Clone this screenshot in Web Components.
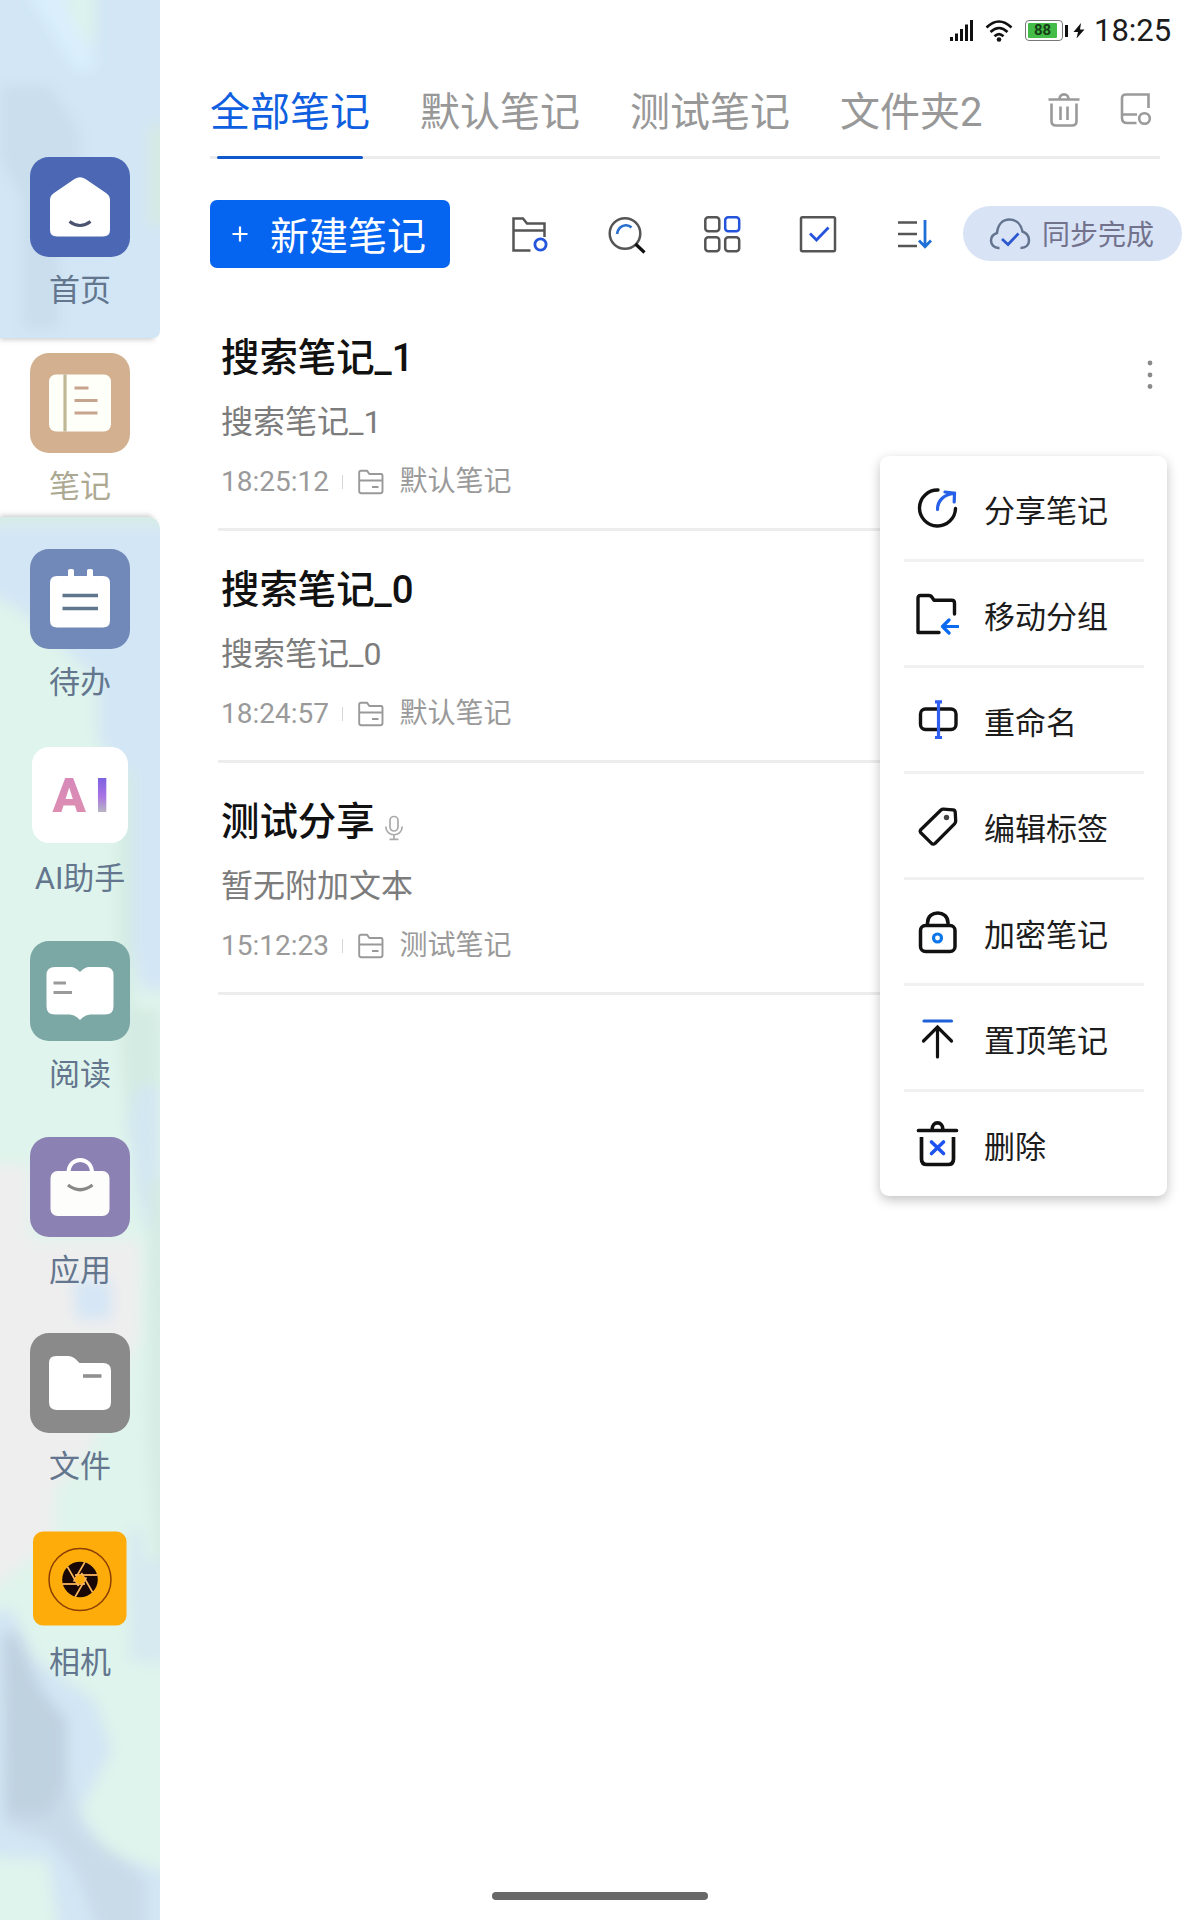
<!DOCTYPE html>
<html lang="zh-CN">
<head>
<meta charset="utf-8">
<title>笔记</title>
<style>
html,body{margin:0;padding:0}
body{width:1200px;height:1920px;overflow:hidden;background:#fff;font-family:Roboto,"Noto Sans CJK SC",sans-serif}
</style>
</head>
<body>
<note-app></note-app>
<script>
const ICONS = {
  signal: [26,26,`<g fill="#111"><rect x="1" y="19" width="3" height="4"/><rect x="6" y="15.500" width="3" height="7.500"/><rect x="11" y="11" width="3" height="12"/><rect x="16" y="6.500" width="3" height="16.500"/><rect x="21" y="2" width="3" height="21"/></g>`],
  wifi: [28,26,`<g fill="none" stroke="#111" stroke-width="2.600"><path d="M1.500 9.500Q14-2.500 26.500 9.500"/><path d="M5.500 14Q14 6 22.500 14"/><path d="M9.500 18.200Q14 14 18.500 18.200"/></g><circle cx="14" cy="21.500" r="2.300" fill="#111"/>`],
  bolt: [12,16,`<path d="M8 0L.5 9H5L3.500 15.500L11.500 6.500H7Z" fill="#111"/>`],
  trash: [34,36,`<g fill="none" stroke="#9a9a9a" stroke-width="2.600"><path d="M1.500 7.500H32.500M12.500 7C12.500 .8 21.500 .8 21.500 7M4.500 11.500V29Q4.500 33.500 9 33.500H25Q29.500 33.500 29.500 29V11.500M13.500 14.500V28M20.500 14.500V28"/></g>`],
  drive: [34,36,`<g fill="none" stroke="#9a9a9a" stroke-width="2.600"><path d="M17.500 31H8Q3 31 3 26V6Q3 2.500 7 2.500H29.500V16M3 22.500H18"/><circle cx="25.500" cy="26.500" r="5.300"/></g>`],
  folderSet: [40,40,`<g fill="none" stroke="#555" stroke-width="2.500"><path d="M20.500 36.500H3.500V4.500H13L17 9.500H34.500V23M3.500 16.500H34.500"/><circle cx="30.500" cy="30.500" r="5.600" stroke="#2453dc" stroke-width="2.800"/></g>`],
  search: [40,40,`<g fill="none"><circle cx="19" cy="19.500" r="15.300" stroke="#555" stroke-width="2.500"/><path d="M11 20Q12.500 12 19.500 11.300Q23 11 25.500 13.500" stroke="#2a6fd0" stroke-width="2.600"/><path d="M29.500 30L38.500 38.500" stroke="#111" stroke-width="3.200"/></g>`],
  grid: [40,40,`<g fill="none" stroke="#555" stroke-width="2.500"><rect x="3.300" y="3.300" width="14" height="14" rx="3"/><rect x="23.200" y="3.300" width="14" height="14" rx="3" stroke="#2453dc"/><rect x="3.300" y="23.300" width="14" height="14" rx="3"/><rect x="23.200" y="23.300" width="14" height="14" rx="3"/></g>`],
  check: [40,40,`<g fill="none"><rect x="3" y="3.300" width="34" height="34" rx="1.500" stroke="#555" stroke-width="2.500"/><path d="M12 19.500L18.500 26L30.500 13.500" stroke="#2453dc" stroke-width="2.800"/></g>`],
  sort: [40,40,`<g fill="none" stroke="#555" stroke-width="2.600"><path d="M4 8.500H23M4 20H23M4 32H23"/><path d="M31 6V32M25 26.500L31 32.800L37 26.500" stroke="#1e6fd6" stroke-width="2.800"/></g>`],
  cloud: [42,34,`<g fill="none" stroke="#64748e" stroke-width="2.500"><path d="M10.500 31C5 31.500 2 27.500 2 23.500C2 19.500 5 17 8 16C9 7 14 2.500 20.500 2.500C27.500 2.500 32 7.500 33.500 14.500C37.500 16 40 19.500 40 23.500C40 28 37 31 31.500 31"/><path d="M13 22L19 27.500L29.500 16.500" stroke="#2c57cf" stroke-width="2.700"/></g>`],
  folder: [28,26,`<g fill="none" stroke="#999" stroke-width="1.900"><path d="M2.200 22V3.500Q2.200 1.800 4 1.800H10L12.500 5H24Q25.500 5 25.500 6.500V22Q25.500 24.200 23.500 24.200H4.200Q2.200 24.200 2.200 22ZM2 11.500H25.500M15 18H21.500"/></g>`],
  mic: [20,26,`<g fill="none" stroke="#aaa" stroke-width="1.700"><rect x="6" y="1.500" width="8" height="14.500" rx="4"/><path d="M1.800 11.500C1.800 22.500 18.200 22.500 18.200 11.500M10 19.800V24M5.500 24.300H14.500"/></g>`],
  dots: [10,32,`<g fill="#8a8a8a"><circle cx="5" cy="4" r="2.400"/><circle cx="5" cy="16" r="2.400"/><circle cx="5" cy="27.500" r="2.400"/></g>`],
  share: [44,44,`<g fill="none" stroke="#111" stroke-width="3.400" stroke-linecap="round"><path d="M23 4A18 18 0 1 0 40.500 22.500"/><path d="M22.500 23.500C22.500 14.500 29 8.500 39 7.500M30 6L39.500 7.200L39.200 16" stroke="#2660e8" stroke-width="3.200"/></g>`],
  move: [44,44,`<g fill="none" stroke="#111" stroke-width="3.400" stroke-linecap="round" stroke-linejoin="round"><path d="M24 40.500H3V6Q3 3.500 5.500 3.500H14Q16 3.500 17.500 6L19 8.300H36.500Q39.500 8.300 39.500 11V22"/><path d="M43 34.500H27.500M34 28L27.500 34.500L34 41" stroke="#0b6bf0" stroke-width="3.200"/></g>`],
  rename: [44,44,`<g fill="none" stroke="#111" stroke-width="3.400"><rect x="5.500" y="11" width="35.500" height="20.500" rx="5"/><path d="M23.500 3.500V40M20 3.800H27M20 39.500H27" stroke="#2e5ff0" stroke-width="3.200"/></g>`],
  tag: [44,44,`<path d="M5.500 26L26 6Q27 5 28.500 5.100L38 5.800Q40 6 40.200 8L40.700 17Q40.700 18.500 39.500 19.800L20 39.500Q18 41 16 38.800L5.500 28.500Q4.500 27.200 5.500 26Z" fill="none" stroke="#111" stroke-width="3.300"/><circle cx="31.500" cy="13.500" r="2.700" fill="#444"/>`],
  lock: [44,44,`<g fill="none" stroke="#111" stroke-width="3.500"><rect x="5.500" y="15.500" width="34.500" height="26" rx="5"/><path d="M12.500 15V13C12.500-.5 33 -.5 33 13V15"/><circle cx="22.500" cy="28" r="4" stroke="#0d76ea" stroke-width="3.200"/></g>`],
  top: [44,44,`<g fill="none" stroke="#111" stroke-width="3.200" stroke-linecap="round"><path d="M9 5H36.500" stroke="#1f60d8"/><path d="M22.500 41V12M8.500 25L22.500 11L36.500 25"/></g>`],
  del: [44,46,`<g fill="none" stroke="#111" stroke-width="3.700" stroke-linecap="round"><path d="M3.500 9.500H41.500M17 9C17-.5 28-.5 28 9"/><path d="M6.500 16V38Q6.500 43.500 12 43.500H33Q38.500 43.500 38.500 38V16" stroke-linecap="butt"/><path d="M16.500 21L28.500 32.500M28.500 21L16.500 32.500" stroke="#1d53ee" stroke-width="3.600"/></g>`],
  home: [100,100,`<rect width="100" height="100" rx="19" fill="#4c68b5"/><path d="M20 43Q20 38.500 24 36L44.500 22Q50 18.500 55.500 22L76 36Q80 38.500 80 43V73Q80 79.500 73 79.500H27Q20 79.500 20 73Z" fill="#fff"/><path d="M39.500 64.500Q50 72.500 60.500 64.500" fill="none" stroke="#4a5470" stroke-width="3"/>`],
  note: [100,100,`<rect width="100" height="100" rx="19" fill="#d2b090"/><rect x="19" y="21.500" width="62" height="57" rx="7" fill="#fffffa"/><path d="M35 21.500V78.500" stroke="#bfb795" stroke-width="3.200"/><path d="M44.500 35H58.500M44.500 47.500H67.500M44.500 60H67.500" stroke="#c7a48c" stroke-width="3"/>`],
  todo: [100,100,`<rect width="100" height="100" rx="19" fill="#7089b8"/><path d="M27 27H38V21.500Q38 20 40 20H42Q44 20 44 21.500V27H57V21.500Q57 20 59 20H61Q63 20 63 21.500V27H73Q80 27 80 34V71.500Q80 78.500 73 78.500H27Q20 78.500 20 71.500V34Q20 27 27 27Z" fill="#fff"/><path d="M32.500 46.500H68M32.500 59.500H68" stroke="#60768c" stroke-width="3.600"/>`],
  read: [100,100,`<rect width="100" height="100" rx="19" fill="#7ba7a5"/><path d="M25 26H41Q45 26 50 31Q55 26 59 26H75Q83.500 26 83.500 34V65.500Q83.500 73.500 75 73.500H60Q55 73.500 50 79Q45 73.500 40 73.500H25Q16.500 73.500 16.500 65.500V34Q16.500 26 25 26Z" fill="#fff"/><path d="M23.500 42H36M23.500 51.500H42" stroke="#9a9a9a" stroke-width="3.200"/>`],
  apps: [100,100,`<rect width="100" height="100" rx="19" fill="#8b81b3"/><path d="M38.500 36C38.500 18.500 62 18.500 62 36" fill="none" stroke="#fff" stroke-width="4"/><rect x="20.500" y="34" width="59" height="45" rx="7" fill="#fdfdfc"/><path d="M38 48Q50 57.500 62.500 48" fill="none" stroke="#888" stroke-width="3.200"/>`],
  files: [100,100,`<rect width="100" height="100" rx="19" fill="#8a8a8a"/><path d="M26 23H38Q42.500 23 46 26.500L49.500 30H73Q81 30 81 37.500V69Q81 77 73 77H27Q19 77 19 69V30Q19 23 26 23Z" fill="#fff"/><path d="M53 43H71.500" stroke="#909090" stroke-width="3.600"/>`],
  camera: [100,100,`<rect x="3" y="2.500" width="93.500" height="94" rx="10" fill="#fdac0a"/><circle cx="50" cy="50.500" r="31" fill="none" stroke="#8c3f00" stroke-width="1.500"/><circle cx="50" cy="50.500" r="17.800" fill="#180704"/><g stroke="#fcb65c" stroke-width="1.800"><path d="M45 46L67.500 46"/><path d="M45 46L67.500 46" transform="rotate(60 50 50.500)"/><path d="M45 46L67.500 46" transform="rotate(120 50 50.500)"/><path d="M45 46L67.500 46" transform="rotate(180 50 50.500)"/><path d="M45 46L67.500 46" transform="rotate(240 50 50.500)"/><path d="M45 46L67.500 46" transform="rotate(300 50 50.500)"/></g><circle cx="50" cy="50.500" r="4.500" fill="#fdac0a"/>`]
};

function define(name, css, html) {
  customElements.define(name, class extends HTMLElement {
    connectedCallback() {
      if (this.shadowRoot) return;
      const t = document.createElement('template');
      t.innerHTML = `<style>*{box-sizing:border-box}${css}</style>` + (typeof html === 'function' ? html(this) : html);
      this.attachShadow({mode: 'open'}).append(t.content.cloneNode(true));
    }
  });
}

define('ui-icon', `:host{display:block;flex:none}svg{display:block}`, el => {
  const [w, h, body] = ICONS[el.getAttribute('name')];
  return `<svg width="${w}" height="${h}" viewBox="0 0 ${w} ${h}">${body}</svg>`;
});

define('battery-level', `:host{display:flex;align-items:center;gap:2px;flex:none}
  .case{display:flex;width:38px;height:21px;border:1.500px solid #777;border-radius:4px;padding:2px 5px 2px 2px}
  .fill{flex:1;background:#43bd48;border-radius:1px;font:700 15px/15px Roboto,sans-serif;color:#163f17;text-align:center}
  .cap{width:3px;height:12px;background:#111}`,
  `<div class="case"><div class="fill"><slot></slot></div></div><div class="cap"></div>`);

define('status-bar', `:host{display:flex;height:60px;align-items:center;padding-left:789px;padding-top:1px;color:#1c1c1c}
  .time{font-size:31px;line-height:40px;margin-left:9px}
  .w{margin-left:10px}.b{margin-left:12px}.z{margin-left:5px}`,
  `<ui-icon name="signal"></ui-icon><ui-icon class="w" name="wifi"></ui-icon><battery-level class="b">88</battery-level><ui-icon class="z" name="bolt"></ui-icon><span class="time">18:25</span>`);

define('tab-item', `:host{display:block;flex:none;font-size:40px;line-height:60px;color:#989898;white-space:nowrap}
  :host([active]){color:#0f5fe0}
  div{height:73px}:host([active]) i{display:block;height:3px;border-radius:2px;background:#1059cc;width:146px;margin-left:7px}`,
  `<div><slot></slot></div><i></i>`);

define('tab-bar', `:host{display:flex;height:99px;margin:0 40px 0 50px;padding-top:23px;gap:50px;background:linear-gradient(#ececec,#ececec) 0 96px/100% 3px no-repeat}
  .icons{display:flex;gap:38px;padding-top:9px;margin-left:15px}`,
  `<slot></slot><div class="icons"><ui-icon name="trash"></ui-icon><ui-icon name="drive"></ui-icon></div>`);

define('primary-button', `:host{display:flex;align-items:center;width:240px;height:68px;border-radius:7px;background:#0565f0;color:#fff;font-size:39px;line-height:56px;padding-left:22px}
  svg{margin-right:22px}span{padding-top:5px}`,
  `<svg width="16" height="16" viewBox="0 0 16 16"><path d="M8 .5V15.500M.5 8H15.500" stroke="#fff" stroke-width="2.200"/></svg><span><slot></slot></span>`);

define('sync-pill', `:host{display:flex;align-items:center;width:219px;height:55px;border-radius:28px;background:#d8e3f6;color:#72728c;font-size:28px;line-height:40px;padding-left:26px;gap:11px}span{padding-top:4px}`,
  `<ui-icon name="cloud"></ui-icon><span><slot></slot></span>`);

define('tool-bar', `:host{display:flex;height:68px;margin:41px 0 0 50px;align-items:center}
  .set{display:flex;gap:56px;margin:0 29px 0 60px}sync-pill{margin-top:-1px}`,
  `<primary-button>新建笔记</primary-button><div class="set">${['folderSet','search','grid','check','sort'].map(n => `<ui-icon name="${n}"></ui-icon>`).join('')}</div><sync-pill>同步完成</sync-pill>`);

define('note-card', `:host{display:flex;height:232px;margin:0 40px 0 58px;padding:31px 0 0 3px;border-bottom:3px solid #ededed;justify-content:space-between}
  .t{display:flex;height:56px;align-items:center;font-size:38.400px;font-weight:500;line-height:56px;color:#111}
  .t ui-icon{margin:11px 0 0 9px}
  .p{font-size:32px;line-height:48px;margin-top:12px;color:#7c7c7c}
  .m{display:flex;align-items:center;font-size:28px;line-height:42px;margin-top:15px;color:#9a9a9a}
  .m i{width:1.500px;height:14px;background:#d5d5d5;margin:0 14px 0 13px}
  .m ui-icon{margin-right:14px}.c{margin-top:29px;margin-right:5px}`,
  el => `<div><div class="t"><span><slot name="title"></slot></span>${el.hasAttribute('voice') ? '<ui-icon name="mic"></ui-icon>' : ''}</div>
  <div class="p"><slot></slot></div><div class="m"><span><slot name="time"></slot></span><i></i><ui-icon name="folder"></ui-icon><span><slot name="folder"></slot></span></div></div>
  ${el.hasAttribute('menu') ? '<ui-icon class="c" name="dots"></ui-icon>' : ''}`);

define('menu-item', `:host{display:flex;height:106px;align-items:center;margin:0 23px 0 24px;padding-left:11px;border-bottom:3px solid #f1f1f1;font-size:31px;line-height:46px;color:#1c1c1c}
  :host(:last-of-type){border-bottom-color:transparent}
  span{margin-top:8px}ui-icon{margin-right:25px}`,
  el => `<ui-icon name="${el.getAttribute('icon')}"></ui-icon><span><slot></slot></span>`);

define('context-menu', `:host{display:block;position:absolute;left:880px;top:456px;width:287px;height:740px;background:#fff;border-radius:9px;box-shadow:0 4px 12px rgba(0,0,0,.24)}`, `<slot></slot>`);

define('side-item', `:host{display:flex;flex-direction:column;align-items:center;height:196px;color:#63768e;font-size:31px;line-height:44px}
  :host([active]){color:#aca892}
  span{margin-top:12px}
  .ai{width:96px;height:96px;margin:2px 0;border-radius:17px;background:#fff;display:flex;align-items:center;justify-content:center;gap:9px;padding:2px 0 0 2px;font:700 49px/60px Roboto,sans-serif}
  .ai b{background:linear-gradient(#d488bd,#e08fae);background-clip:text;-webkit-background-clip:text;color:transparent}
  .ai b+b{background:linear-gradient(#7d62e0 20%,#a872e4 50%,#b8b8c0 78%);background-clip:text;-webkit-background-clip:text}`,
  el => (el.getAttribute('icon') === 'ai' ? `<div class="ai"><b>A</b><b>I</b></div>` : `<ui-icon name="${el.getAttribute('icon')}"></ui-icon>`) + `<span><slot></slot></span>`);

define('side-bar', `:host{display:grid;width:160px;height:1920px;flex:none;overflow:hidden}
  :host>*{grid-area:1/1}
  svg{display:block}.items{padding-top:157px}`,
  `<svg width="160" height="1920" viewBox="0 0 160 1920"><defs>
  <clipPath id="c"><path d="M0 0H160V330Q160 338 152 338H0ZM0 517H146Q160 517 160 531V1920H0Z"/></clipPath>
  <filter id="f" x="-30%" y="-10%" width="160%" height="120%"><feGaussianBlur stdDeviation="7"/></filter>
  <filter id="s" x="-10%" y="-10%" width="120%" height="120%"><feGaussianBlur stdDeviation="2.500"/></filter></defs>
  <path d="M0 331H154V340H0ZM0 515H150L158 525H0Z" fill="#d0d0d0" filter="url(#s)"/>
  <g clip-path="url(#c)"><rect width="160" height="1920" fill="#dff4ec"/><g filter="url(#f)">
  <path d="M-20-20H180V520H-20Z" fill="#d2e6f5"/>
  <path d="M0 85H50L80 130V240L60 250V330H22V200L0 160Z" fill="#cbdeed"/>
  <path d="M65-10H95V45H80L70 15Z" fill="#dcf3ec"/><path d="M25-10H62L76 25L95 55V70H75L45 20Z" fill="#daeffc"/>
  <path d="M148 125H170V225H148Z" fill="#d5eae3"/>
  <path d="M-10 500H180V523H-10Z" fill="#d4ebe5"/>
  <path d="M-20 526H180V990H142L128 930V780L98 740V680L20 610L-20 590Z" fill="#d3e6f5"/>
  <path d="M118 770H132V1010H160V1140H128L118 1000Z" fill="#d3ebe2"/>
  <path d="M160 1085H138L128 1120L136 1190L146 1230H160Z" fill="#d3e7f2"/>
  <path d="M-20 1165H30V1240H140V1340L110 1390L90 1450L55 1490V1540L15 1570L-20 1600Z" fill="#eeeeee"/>
  <path d="M72 1280H112V1320H76Z" fill="#d6e6f5"/>
  <path d="M150 1180H180V1590H158L148 1440Z" fill="#d5ebe3"/>
  <path d="M128 1530H144V1560H180V1662H130Z" fill="#d6eaf0"/>
  <path d="M-20 1610H12L36 1660L95 1700L112 1750L80 1810L105 1850L170 1875V1940H60L48 1860L-20 1855Z" fill="#d2e6f4"/>
  <path d="M2 1630H18L42 1690L68 1720V1780L82 1830L130 1865L146 1880V1940H102L75 1870L50 1840L4 1825Z" fill="#c9dbe9"/>
  <path d="M2 1635H16L42 1690L66 1720V1780L48 1815H5Z" fill="#bfd2e0"/>
  </g></g></svg><div class="items"><slot></slot></div>`);

define('home-indicator', `:host{display:block;width:216px;height:8px;border-radius:4px;background:#686868;margin:auto 0 20px 332px}`, ``);

define('note-app', `:host{display:flex;position:relative;width:1200px;height:1920px;background:#fff}
  main{display:flex;flex-direction:column;flex:1}
  section{margin-top:31px}`,
  `<side-bar><side-item icon="home">首页</side-item><side-item icon="note" active>笔记</side-item><side-item icon="todo">待办</side-item><side-item icon="ai">AI助手</side-item><side-item icon="read">阅读</side-item><side-item icon="apps">应用</side-item><side-item icon="files">文件</side-item><side-item icon="camera">相机</side-item></side-bar>
  <main><status-bar></status-bar>
  <tab-bar><tab-item active>全部笔记</tab-item><tab-item>默认笔记</tab-item><tab-item>测试笔记</tab-item><tab-item>文件夹2</tab-item></tab-bar>
  <tool-bar></tool-bar>
  <section>
  <note-card menu><span slot="title">搜索笔记_1</span>搜索笔记_1<span slot="time">18:25:12</span><span slot="folder">默认笔记</span></note-card>
  <note-card><span slot="title">搜索笔记_0</span>搜索笔记_0<span slot="time">18:24:57</span><span slot="folder">默认笔记</span></note-card>
  <note-card voice><span slot="title">测试分享</span>暂无附加文本<span slot="time">15:12:23</span><span slot="folder">测试笔记</span></note-card>
  </section><home-indicator></home-indicator></main>
  <context-menu><menu-item icon="share">分享笔记</menu-item><menu-item icon="move">移动分组</menu-item><menu-item icon="rename">重命名</menu-item><menu-item icon="tag">编辑标签</menu-item><menu-item icon="lock">加密笔记</menu-item><menu-item icon="top">置顶笔记</menu-item><menu-item icon="del">删除</menu-item></context-menu>`);
</script>
</body>
</html>
